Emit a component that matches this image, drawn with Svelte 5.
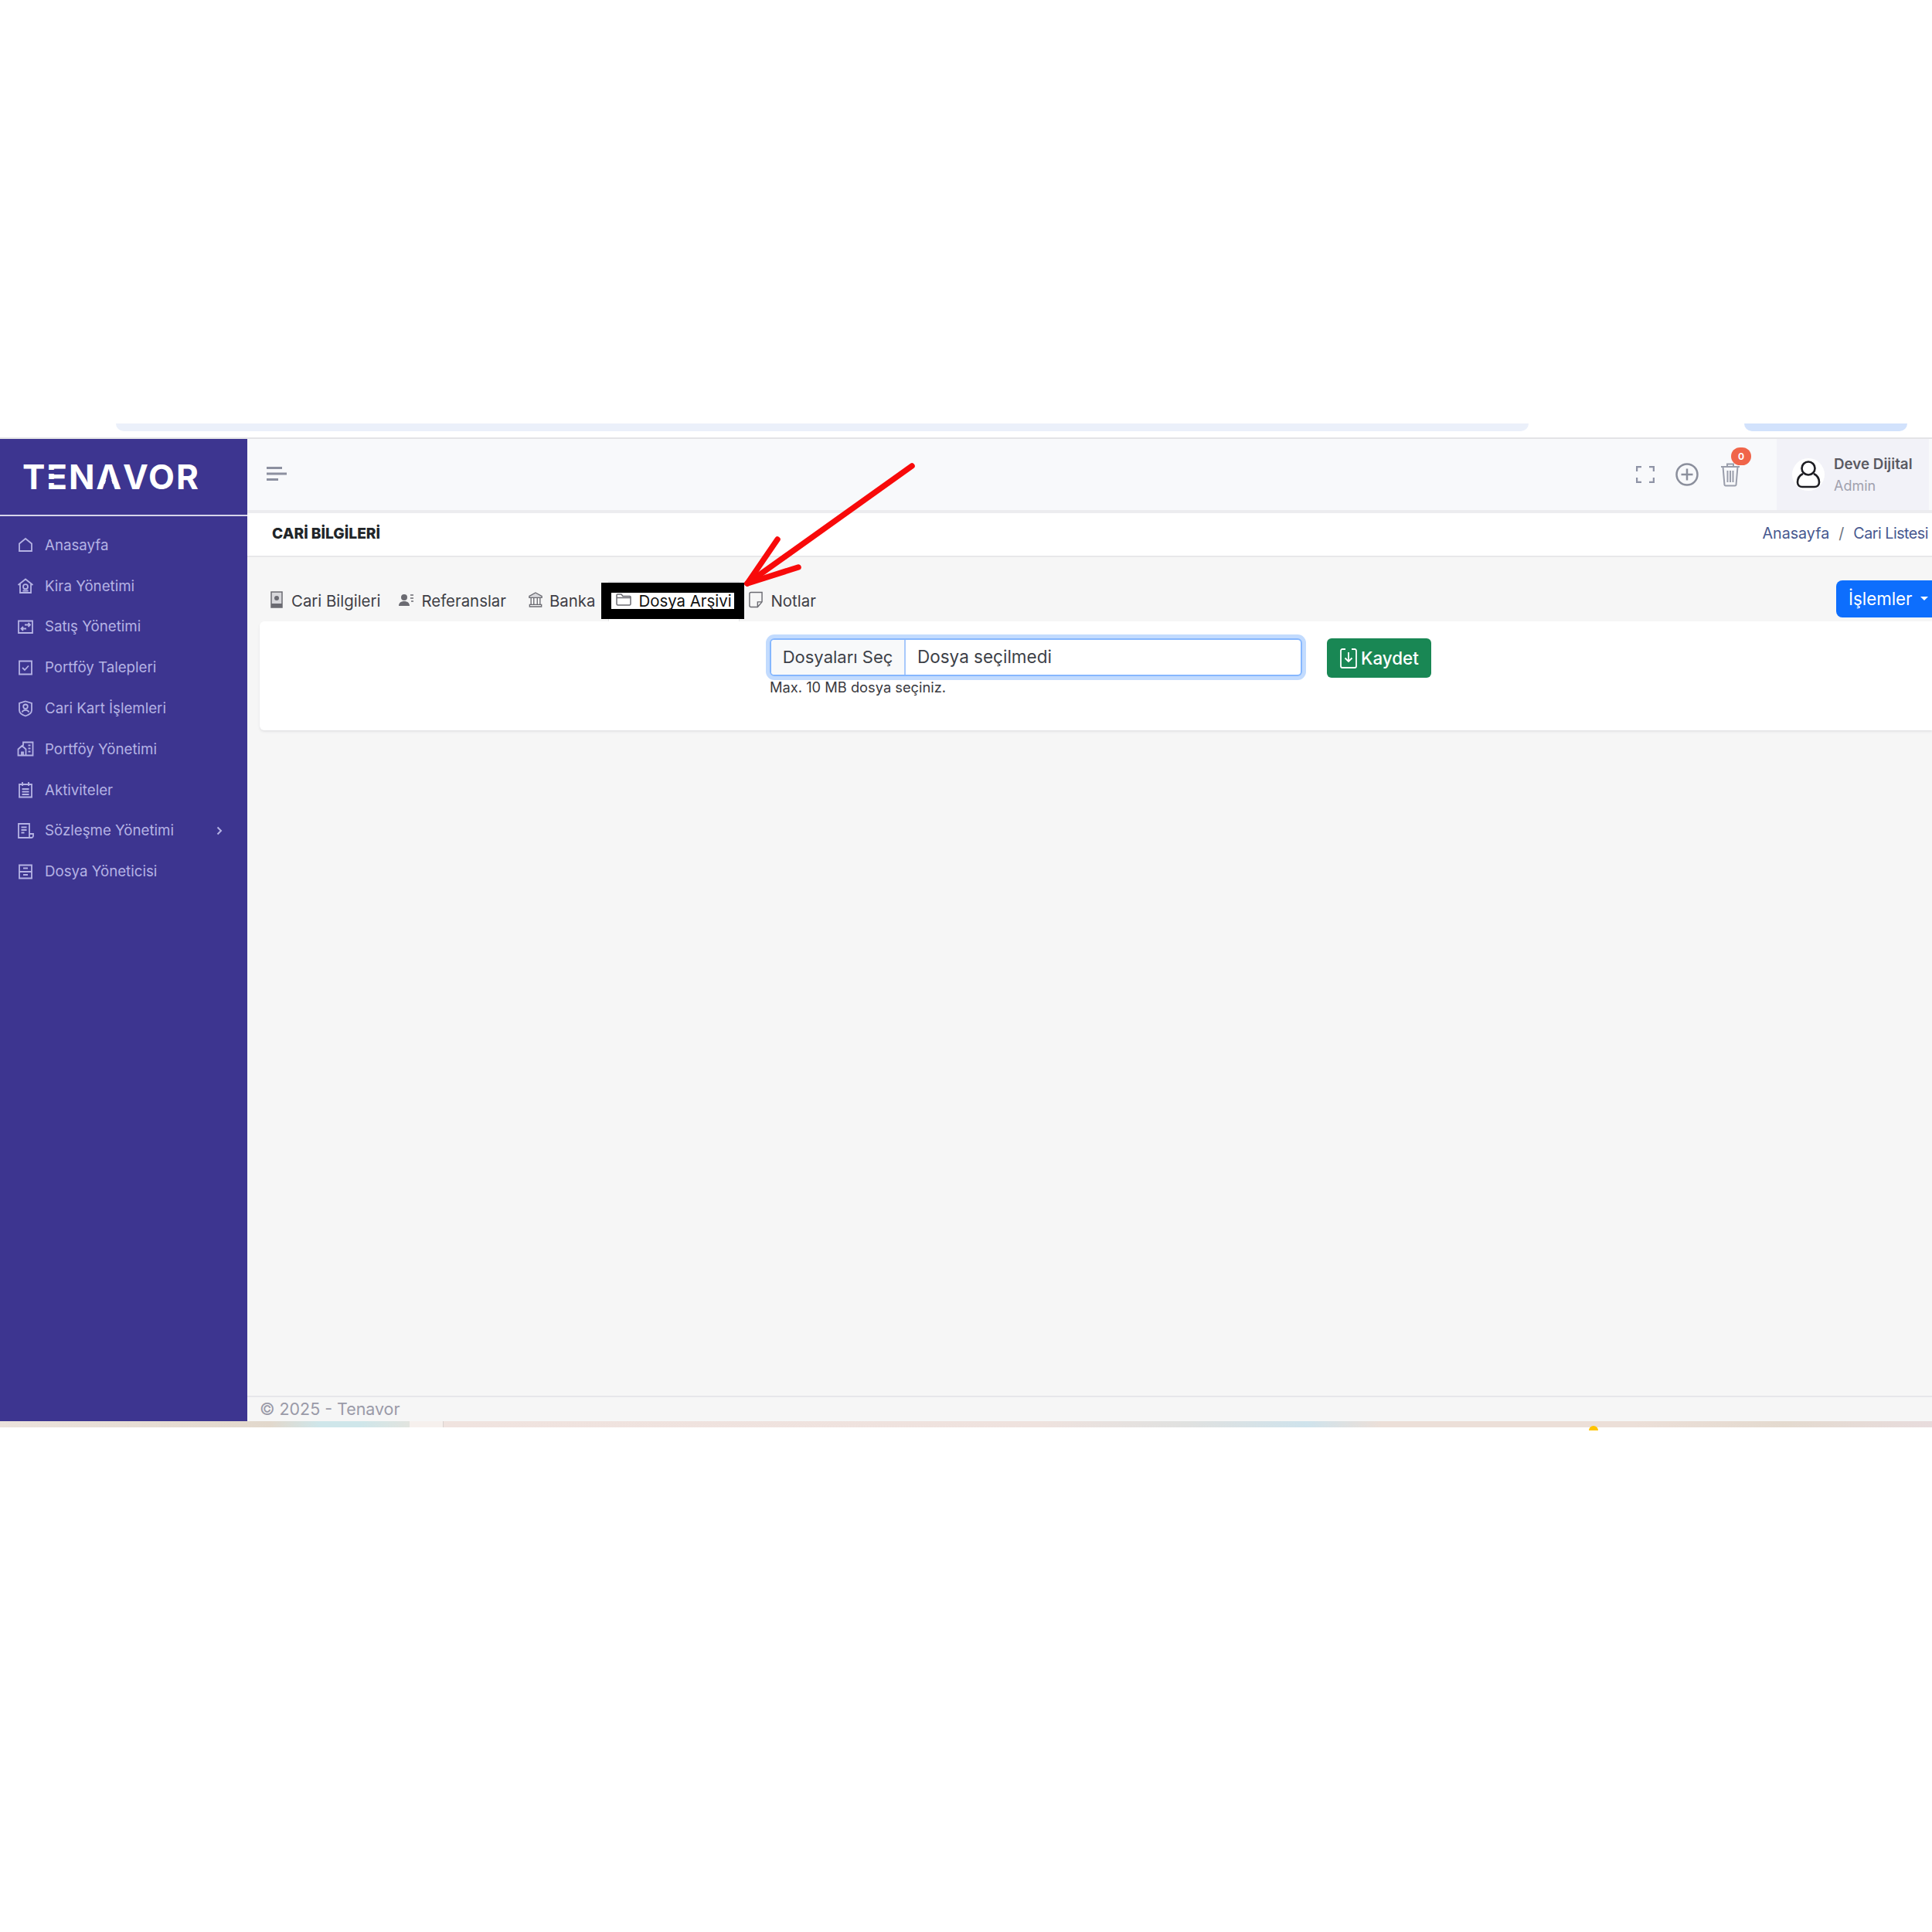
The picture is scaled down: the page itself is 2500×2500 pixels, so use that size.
<script lang="ts">
	interface MenuItem {
		label: string;
		icon: string;
		sub?: boolean;
	}

	const menu: MenuItem[] = [
		{label: 'Anasayfa', icon: 'M3 9.500 11 3l8 6.500V19H3z'},
		{
			label: 'Kira Yönetimi',
			icon: 'M1.500 10 11 2.500l9.500 7.500M4 8.500V20h14V8.500M11 9.200a3 3 0 1 0 0 6 3 3 0 0 0 0-6zM7.500 17.500h7',
		},
		{
			label: 'Satış Yönetimi',
			icon: 'M2 3.500h18v15.500H2zM10 8.500h7M14.500 6l2.500 2.500-2.500 2.500M12 13.500H5.500M8 11l-2.500 2.500L8 16',
		},
		{label: 'Portföy Talepleri', icon: 'M3 2.500h16v17H3zM7 11l3 3 5-5.500'},
		{
			label: 'Cari Kart İşlemleri',
			icon: 'M11 1.500 19 4v9c0 3.500-3.500 6-8 7.500C6.500 19 3 16.500 3 13V4zM11 5.500a2.800 2.800 0 1 0 0 5.600 2.800 2.800 0 0 0 0-5.600zM6.500 15.500c1-2 2.500-2.700 4.500-2.700s3.500.7 4.500 2.700',
		},
		{
			label: 'Portföy Yönetimi',
			icon: 'M8 7V2.500h12.500V19.500H1.500v-8L6.500 7l5 4.500v8M6 19.500v-4h2v4M14.500 6.500h3M14.500 10.500h3M14.500 14.500h3',
		},
		{
			label: 'Aktiviteler',
			icon: 'M3 4h16v16.500H3zM7 1v5M15 1v5M6.500 10h9M6.500 13.500h9M6.500 17h9',
		},
		{
			label: 'Sözleşme Yönetimi',
			icon: 'M2 2h14v18H2zM5.500 6.500h7M5.500 10h7M5.500 13.500h4M16 15h5v2.500a2.500 2.500 0 0 1-2.500 2.500H15',
			sub: true,
		},
		{
			label: 'Dosya Yöneticisi',
			icon: 'M3 2.500h16v17H3zM3 11h16M8 6.500h6M8 15h6',
		},
	];
</script>

<div class="page">
	<div class="browser_strip">
		<div class="address_bar"></div>
		<div class="pill"></div>
	</div>

	<div class="app">
		<aside class="sidebar">
			<div class="logo">
				T<span class="logo_e">E</span>N<span class="logo_a">A</span>VOR
			</div>
			<nav>
				{#each menu as item}
					<div class="menu_item">
						<svg class="menu_icon" viewBox="0 0 22 22"><path d={item.icon} /></svg>
						<span>{item.label}</span>
						{#if item.sub}
							<svg class="chevron" viewBox="0 0 10 14"><path d="m2.500 2.500 4.500 4.500-4.500 4.500" /></svg>
						{/if}
					</div>
				{/each}
			</nav>
		</aside>

		<main class="main">
			<header class="topbar">
				<svg class="burger" viewBox="0 0 26 18">
					<path d="M0 1.500h20M0 9h26M0 16.500h15" />
				</svg>
				<div class="top_actions">
					<svg class="act_full" viewBox="0 0 24 22">
						<path d="M1 7V1h6M17 1h6v6M23 15v6h-6M7 21H1v-6" />
					</svg>
					<svg class="act_plus" viewBox="0 0 30 30">
						<circle cx="15" cy="15" r="13.500" />
						<path d="M15 7.500v15M7.500 15h15" />
					</svg>
					<div class="trash">
						<svg viewBox="0 0 26 32">
							<path
								d="M1 6h24M9 6V2.500h8V6M3.500 6l2 23.500a1.500 1.500 0 0 0 1.500 1h12a1.500 1.500 0 0 0 1.500-1L22.500 6M9.500 11v15M13 11v15M16.500 11v15"
							/>
						</svg>
						<span class="badge">0</span>
					</div>
				</div>
				<div class="user">
					<div class="avatar">
						<svg viewBox="0 0 32 38">
							<circle cx="16" cy="11" r="8.500" />
							<path d="M9 18c-4 2-7 6-7 11 0 4 3 6 6 6h16c3 0 6-2 6-6 0-5-3-9-7-11" />
						</svg>
					</div>
					<div class="user_text">
						<div class="user_name">Deve Dijital</div>
						<div class="user_role">Admin</div>
					</div>
				</div>
			</header>

			<div class="titlebar">
				<h1>CARİ BİLGİLERİ</h1>
				<div class="crumbs">
					<span>Anasayfa</span>
					<span class="slash">/</span>
					<span class="crumb_last">Cari Listesi</span>
				</div>
			</div>

			<div class="content">
				<div class="tabs_row">
					<div class="tab tab_cari">
						<svg viewBox="0 0 16 22">
							<path class="fill_light" d="M1 1h14v20H1z" />
							<path class="fill" d="M1 16h14v5H1zM8 6a3 3 0 1 0 0 6 3 3 0 0 0 0-6z" />
							<path d="M1 1h14v20H1z" />
						</svg>
						Cari Bilgileri
					</div>
					<div class="tab tab_ref">
						<svg viewBox="0 0 20 18">
							<path class="fill" d="M7 2a4 4 0 1 0 0 8 4 4 0 0 0 0-8zM0 17c0-4 3-6 7-6s7 2 7 6z" />
							<path d="M15 3h4M15 7h4M16 11h3" />
						</svg>
						Referanslar
					</div>
					<div class="tab tab_bank">
						<svg viewBox="0 0 20 22">
							<path class="fill_light" d="M10 1 19 6v2H1V6z" />
							<path d="M10 1 19 6v2H1V6zM3.500 8v10M7.500 8v10M12.500 8v10M16.500 8v10M1.500 18h17v3h-17z" />
						</svg>
						Banka
					</div>
					<div class="tab active">
						<svg viewBox="0 0 20 16">
							<path d="M1 13.500V2a1 1 0 0 1 1-1h5l2 2.500h9a1 1 0 0 1 1 1v9a1.500 1.500 0 0 1-1.500 1.500h-15A1.500 1.500 0 0 1 1 13.500zM1 5.500h18" />
						</svg>
						Dosya Arşivi
					</div>
					<div class="tab tab_not">
						<svg viewBox="0 0 20 22">
							<path d="M4 1h15v13l-6 7H4a2 2 0 0 1-2-2V3a2 2 0 0 1 2-2zM19 14h-6v7" />
						</svg>
						Notlar
					</div>
					<button class="actions_btn">İşlemler<span class="caret"></span></button>
				</div>

				<section class="card">
					<div class="form_row">
						<div class="file_input">
							<span class="file_btn">Dosyaları Seç</span>
							<span class="file_name">Dosya seçilmedi</span>
						</div>
						<button class="save_btn">
							<svg viewBox="0 0 22 26">
								<path d="M7 1H3a2 2 0 0 0-2 2v20a2 2 0 0 0 2 2h16a2 2 0 0 0 2-2V3a2 2 0 0 0-2-2h-4M11 5v12M6.500 12.500 11 17l4.500-4.500" />
							</svg>
							Kaydet
						</button>
					</div>
					<div class="help">Max. 10 MB dosya seçiniz.</div>
				</section>
			</div>

			<footer class="footer">© 2025 - Tenavor</footer>
		</main>

		<svg class="arrow" viewBox="0 0 240 180">
			<path d="M232 3 19 155" />
			<path d="M58 98 19 155 85 134" />
		</svg>
	</div>

	<div class="taskbar">
		<div class="task_a"></div>
		<div class="task_b"></div>
		<div class="task_c"></div>
		<span class="dot"></span>
	</div>
</div>

<style>
	:global(body) {
		margin: 0;
		background: #fff;
	}
	.page {
		width: 2500px;
		height: 2500px;
		display: flex;
		flex-direction: column;
		font-family: Inter, 'Liberation Sans', sans-serif;
		color: #333;
		overflow: hidden;
	}
	.browser_strip {
		height: 566px;
		border-bottom: 2px solid #e3e3e6;
		display: flex;
		padding: 0 32px 0 150px;
		justify-content: space-between;
	}
	.address_bar,
	.pill {
		align-self: flex-end;
		height: 10px;
		margin-bottom: 8px;
		border-radius: 0 0 14px 14px;
	}
	.address_bar {
		width: 1828px;
		background: #ebf0fa;
	}
	.pill {
		width: 211px;
		background: #d2e2fc;
	}

	.app {
		position: relative;
		height: 1271px;
		display: flex;
	}
	.sidebar {
		width: 320px;
		flex: none;
		background: #3d3590;
	}
	.logo {
		height: 98px;
		border-bottom: 2px solid #d6d4ea;
		padding-left: 29px;
		font-size: 44px;
		font-weight: 700;
		line-height: 98px;
		letter-spacing: 1.900px;
		color: #fff;
	}
	.logo_e,
	.logo_a {
		position: relative;
	}
	/* the logo's E is three loose bars and its A has no crossbar */
	.logo_e::before,
	.logo_e::after {
		content: '';
		position: absolute;
		left: 2px;
		width: 12px;
		height: 5px;
		background: #3d3590;
	}
	.logo_e::before {
		top: 18px;
	}
	.logo_e::after {
		top: 30px;
	}
	.logo_a::after {
		content: '';
		position: absolute;
		left: calc(50% - 8px);
		top: 19px;
		width: 14px;
		height: 24px;
		background: #3d3590;
		clip-path: polygon(50% 0, 100% 100%, 0 100%);
	}
	nav {
		padding-top: 11px;
	}
	.menu_item {
		height: 52.800px;
		display: flex;
		align-items: center;
		padding-left: 22px;
		font-size: 18.700px;
		color: #b5b3e4;
	}
	.menu_icon {
		width: 22px;
		height: 22px;
		margin-right: 14px;
		flex: none;
	}
	.menu_icon path {
		fill: none;
		stroke: #b5b3e4;
		stroke-width: 1.800;
	}
	.chevron {
		width: 10px;
		height: 14px;
		margin-left: auto;
		margin-right: 31px;
	}
	.chevron path {
		fill: none;
		stroke: #b5b3e4;
		stroke-width: 2;
	}

	.main {
		flex: 1;
		min-width: 0;
		display: flex;
		flex-direction: column;
		background: #f6f6f6;
	}
	.topbar {
		height: 92px;
		flex: none;
		background: #f8f9fb;
		border-bottom: 4px solid #ececef;
		display: flex;
		align-items: center;
		padding-left: 25px;
	}
	.burger {
		width: 26px;
		height: 18px;
		margin-top: -2px;
	}
	.burger path {
		fill: none;
		stroke: #8c90a0;
		stroke-width: 3;
	}
	.top_actions {
		margin-left: auto;
		display: flex;
		align-items: center;
		gap: 30px;
		margin-right: 47px;
	}
	.act_full {
		width: 24px;
		height: 22px;
		margin-right: -3px;
	}
	.act_full path {
		fill: none;
		stroke: #8f94a6;
		stroke-width: 2.500;
	}
	.act_plus {
		width: 30px;
		height: 30px;
	}
	.act_plus circle,
	.act_plus path {
		fill: none;
		stroke: #8b8f9c;
		stroke-width: 2.500;
	}
	.trash {
		position: relative;
		width: 26px;
		height: 32px;
		margin-left: -2px;
	}
	.trash svg {
		width: 26px;
		height: 32px;
	}
	.trash path {
		fill: none;
		stroke: #9a9eab;
		stroke-width: 2;
	}
	.badge {
		position: absolute;
		left: 14px;
		top: -19px;
		width: 26px;
		height: 23px;
		border-radius: 12px;
		background: #f0654a;
		color: #fff;
		font-size: 12px;
		font-weight: 700;
		line-height: 23px;
		text-align: center;
	}
	.user {
		width: 197px;
		height: 92px;
		margin-right: 4px;
		background: #f2f2f8;
		display: flex;
		align-items: center;
		box-sizing: border-box;
		padding-left: 20px;
	}
	.avatar {
		width: 42px;
		height: 42px;
		border-radius: 50%;
		background: #fff;
		display: flex;
		align-items: center;
		justify-content: center;
		flex: none;
	}
	.avatar svg {
		width: 32px;
		height: 38px;
	}
	.avatar circle,
	.avatar path {
		fill: none;
		stroke: #1d1d22;
		stroke-width: 2.600;
	}
	.user_text {
		margin-left: 12px;
		padding-top: 1px;
	}
	.user_name {
		font-size: 18.800px;
		font-weight: 600;
		color: #5a5a62;
		line-height: 26px;
		white-space: nowrap;
	}
	.user_role {
		font-size: 18px;
		color: #a1a1ae;
		line-height: 26px;
		margin-top: 2px;
	}

	.titlebar {
		height: 52px;
		padding: 0 5px 3px 32px;
		flex: none;
		background: #fff;
		border-bottom: 2px solid #e8e8ea;
		display: flex;
		align-items: center;
		justify-content: space-between;
	}
	h1 {
		margin: 0;
		font-size: 19.200px;
		font-weight: 800;
		color: #212529;
	}
	.crumbs {
		display: flex;
		gap: 12px;
		font-size: 19.700px;
		color: #47588f;
	}
	.crumb_last {
		letter-spacing: -0.500px;
	}
	.slash {
		color: #6c7280;
	}

	.content {
		flex: 1;
		padding: 30px 0 0 16px;
	}
	.tabs_row {
		height: 53px;
		display: flex;
		align-items: flex-start;
		font-size: 20.400px;
		color: #3f3f46;
	}
	.tab {
		display: flex;
		align-items: center;
		height: 47px;
		margin-top: 3px;
		white-space: nowrap;
	}
	.tab svg {
		flex: none;
		margin-top: -4px;
	}
	.tab svg path {
		fill: none;
		stroke: #6b6b72;
		stroke-width: 1.500;
	}
	.tab svg path.fill {
		fill: #6b6b72;
		stroke: none;
	}
	.tab svg path.fill_light {
		fill: #d8d8dc;
		stroke: none;
	}
	.tab_cari {
		margin-left: 14px;
		gap: 11px;
	}
	.tab_cari svg {
		width: 16px;
		height: 22px;
	}
	.tab_ref {
		margin-left: 24px;
		gap: 9px;
	}
	.tab_ref svg {
		width: 20px;
		height: 18px;
	}
	.tab_bank {
		margin-left: 29px;
		gap: 9px;
	}
	.tab_bank svg {
		width: 18px;
		height: 22px;
	}
	.tab.active {
		position: relative;
		margin-left: 8px;
		box-sizing: border-box;
		width: 185px;
		flex: none;
		border: 13px solid #000;
		background: #fff;
		color: #111;
		gap: 9px;
		padding-left: 6px;
	}
	.tab.active::before {
		content: '';
		position: absolute;
		left: -4px;
		top: -15px;
		width: 170px;
		height: 2px;
		background: #e8e8ea;
	}
	.tab.active::after {
		content: '';
		position: absolute;
		left: -4px;
		top: calc(100% + 13px);
		width: 168px;
		height: 3px;
		background: #fff;
		border: solid #e4e4e6;
		border-width: 0 1px;
	}
	.tab.active svg {
		width: 20px;
		height: 16px;
	}
	.tab_not {
		margin-left: 5px;
		gap: 10px;
	}
	.tab_not svg {
		width: 19px;
		height: 22px;
	}
	.actions_btn {
		margin-left: auto;
		width: 124px;
		height: 48px;
		border: 0;
		border-radius: 8px 0 0 8px;
		background: #0d6efd;
		color: #fff;
		font: inherit;
		font-size: 22.300px;
		text-align: left;
		padding: 0 0 2px 16px;
		display: flex;
		align-items: center;
	}
	.caret {
		margin-left: auto;
		margin-right: 5px;
		border-top: 5px solid #fff;
		border-left: 5px solid transparent;
		border-right: 5px solid transparent;
	}

	.card {
		height: 141px;
		box-sizing: border-box;
		background: #fff;
		border-radius: 6px 0 0 6px;
		box-shadow: 0 2px 3px #e3e3e5;
		padding: 22px 0 0 660px;
	}
	.form_row {
		display: flex;
		gap: 32px;
	}
	.file_input {
		width: 689px;
		height: 49px;
		box-sizing: border-box;
		display: flex;
		border: 2px solid #86b7fe;
		border-radius: 6px;
		box-shadow: 0 0 0 5px #c2dbfe;
		background: #fff;
		font-size: 22px;
		color: #3d4148;
		line-height: 44px;
		overflow: hidden;
	}
	.file_btn {
		width: 174px;
		flex: none;
		box-sizing: border-box;
		background: #f8f9fa;
		border-right: 2px solid #a8c9fb;
		text-align: center;
	}
	.file_name {
		padding-left: 15px;
		font-size: 22.500px;
	}
	.save_btn {
		width: 135px;
		height: 51px;
		border: 0;
		border-radius: 6px;
		background: #198754;
		color: #fff;
		font: inherit;
		font-size: 22.400px;
		font-weight: 500;
		display: flex;
		align-items: center;
		gap: 5px;
		padding: 0 0 0 17px;
	}
	.save_btn svg {
		width: 22px;
		height: 26px;
	}
	.save_btn path {
		fill: none;
		stroke: #fff;
		stroke-width: 1.800;
	}
	.help {
		margin-top: -1px;
		font-size: 18.300px;
		line-height: 26px;
		color: #3a3a40;
	}

	.footer {
		height: 31px;
		flex: none;
		border-top: 2px solid #e6e6ea;
		padding-left: 16px;
		font-size: 21.400px;
		line-height: 31px;
		color: #9a9aa8;
	}

	/* annotation drawn over the screenshot */
	.arrow {
		position: absolute;
		left: 948px;
		top: 32px;
		width: 240px;
		height: 180px;
		overflow: visible;
	}
	.arrow path {
		fill: none;
		stroke: #f80a0a;
		stroke-width: 7.500;
		stroke-linecap: round;
		stroke-linejoin: round;
	}

	.taskbar {
		position: relative;
		height: 8px;
		display: flex;
	}
	.task_a {
		width: 530px;
		background: linear-gradient(90deg, #ebe2dc, #e2d8cc 66%, #cfe6ea 78%, #cfe6ea 88%, #e2e4df);
	}
	.task_b {
		width: 43px;
		background: #f6f0ed;
		border-right: 1px solid #d9d2cf;
	}
	.task_c {
		flex: 1;
		background: linear-gradient(90deg, #f0e3df, #efe2de 40%, #e0e1e0 50%, #cfe3ec 58%, #ecdfd8 63%, #ecdfd8 80%, #e4dacf 90%, #e8dcdd);
	}
	.dot {
		position: absolute;
		left: 2056px;
		top: 6px;
		width: 12px;
		height: 6px;
		border-radius: 6px 6px 0 0;
		background: #ffc400;
	}
</style>
